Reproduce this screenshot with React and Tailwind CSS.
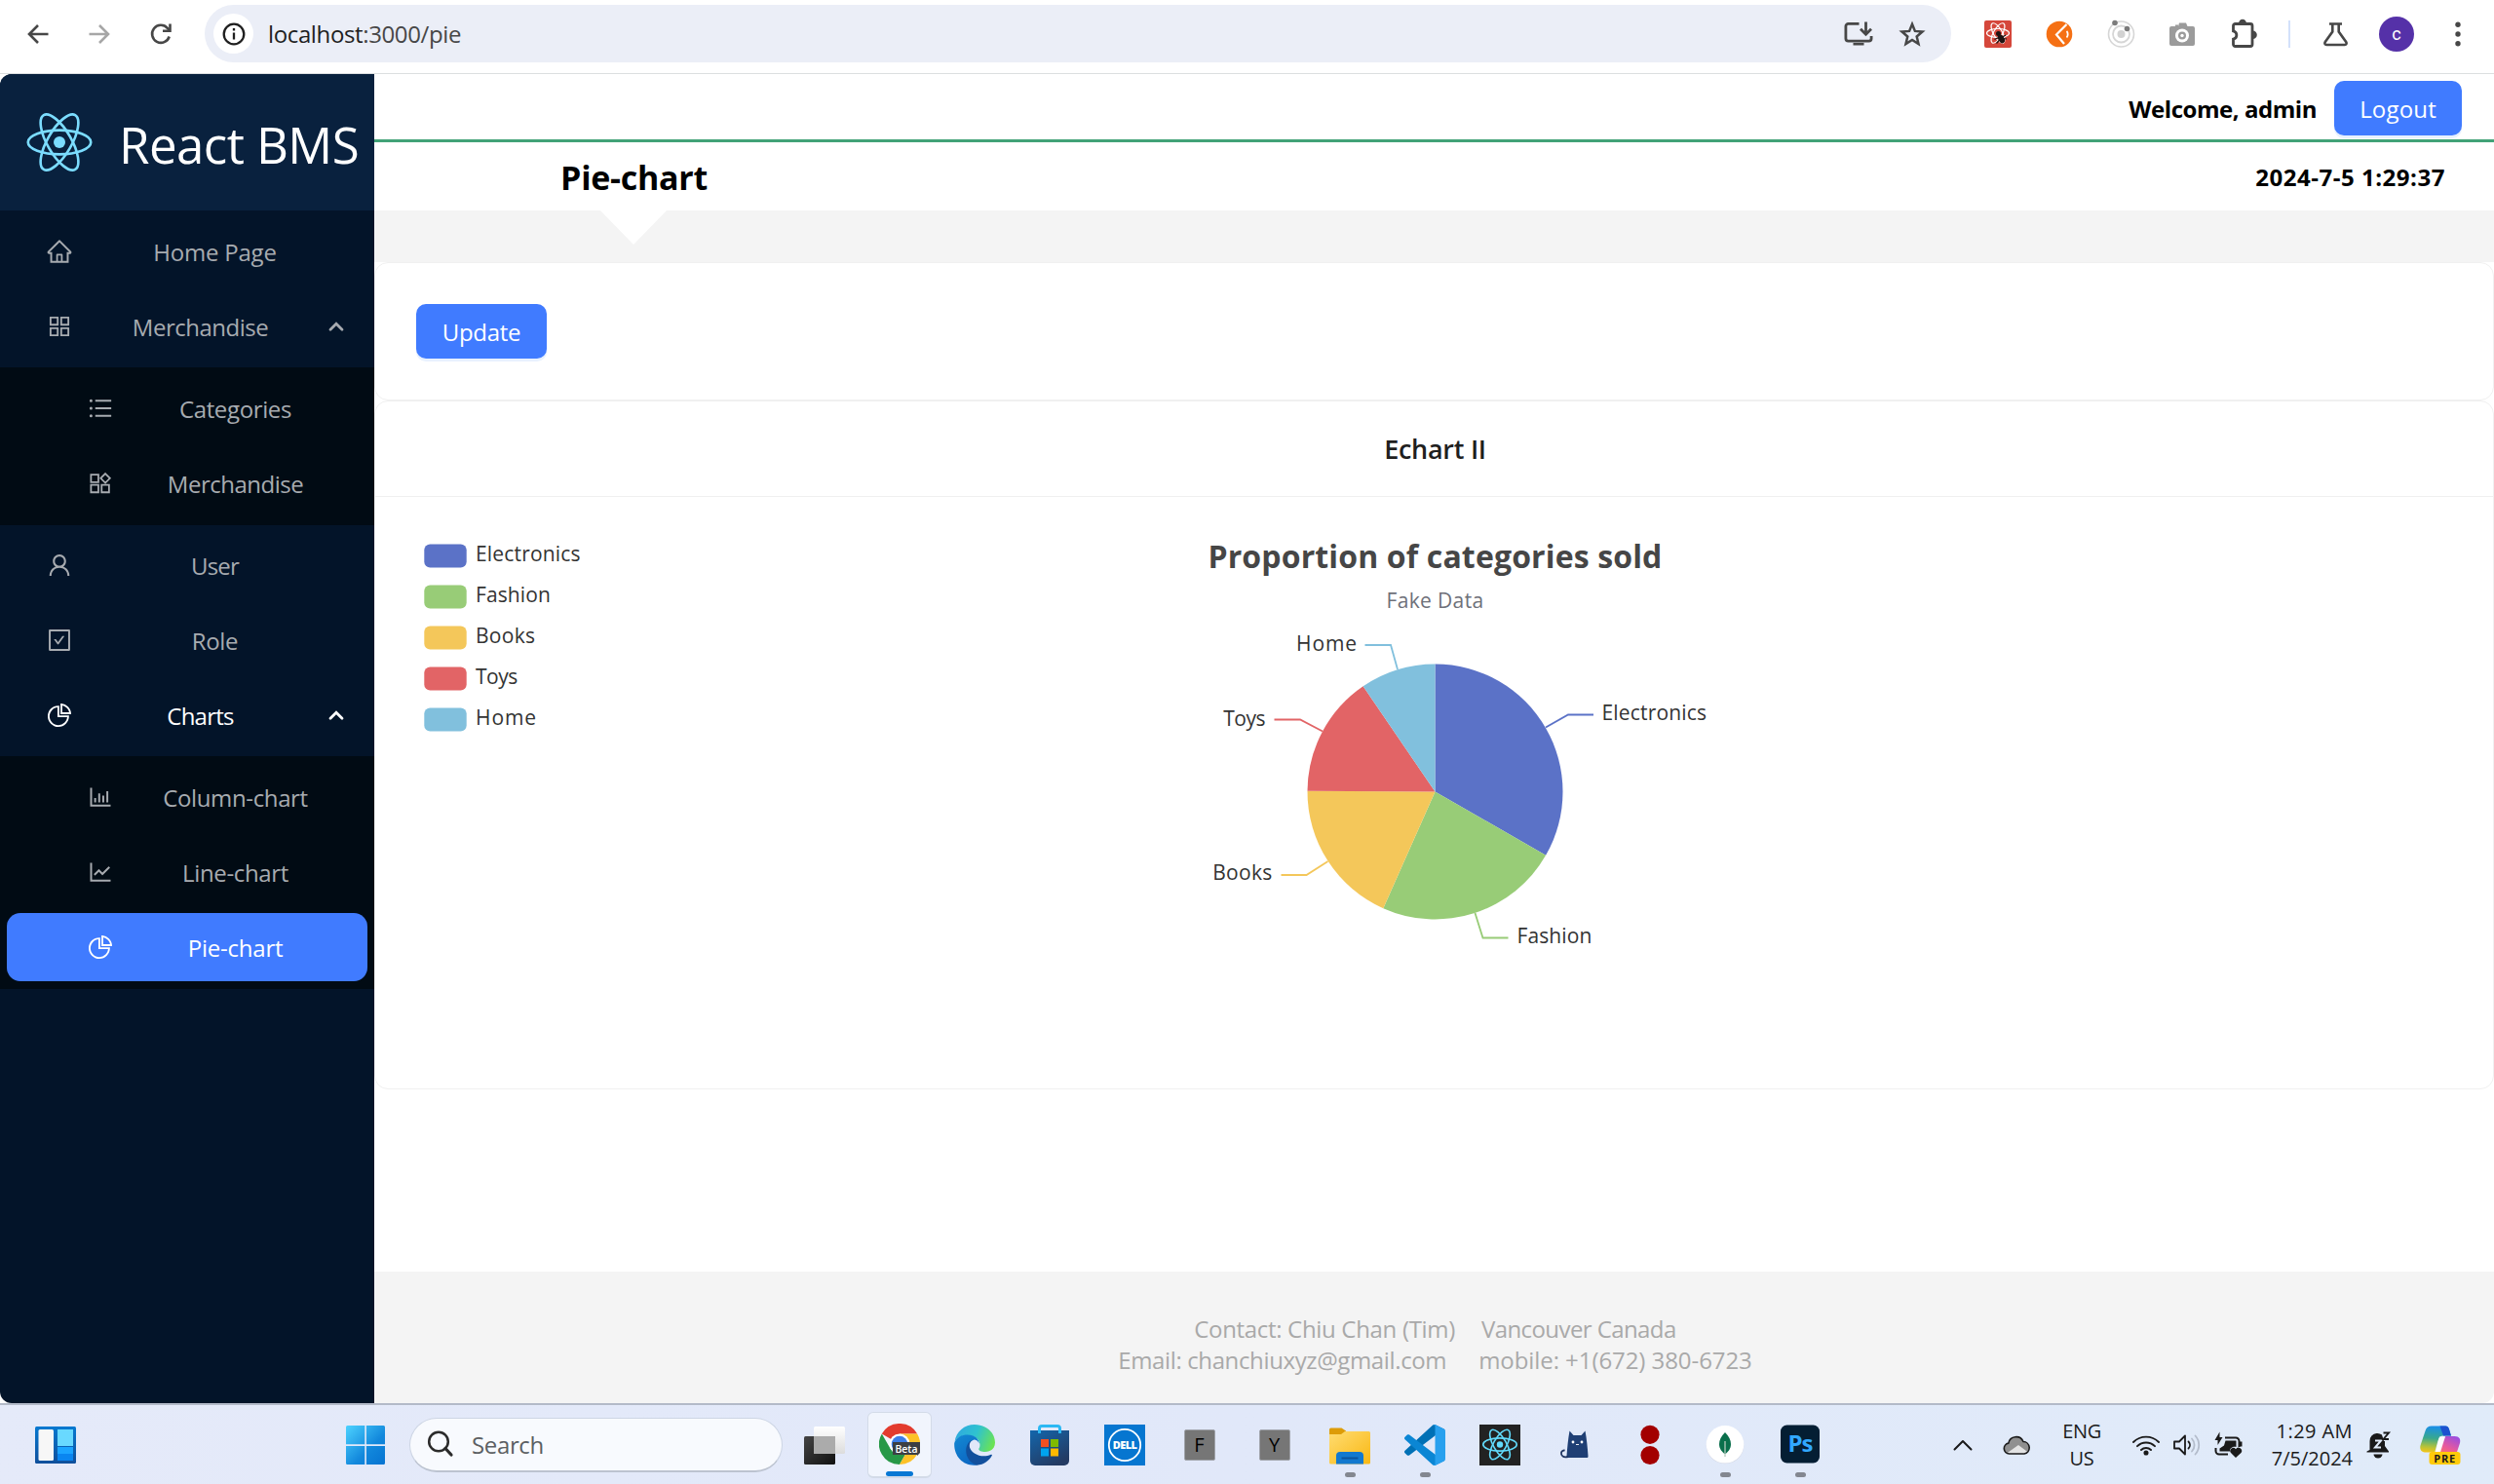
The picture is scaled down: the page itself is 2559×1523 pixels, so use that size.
import React from "react";
import {
  AiOutlineHome,
  AiOutlineAppstore,
  AiOutlineUnorderedList,
  AiOutlineUser,
  AiOutlineCheckSquare,
  AiOutlinePieChart,
  AiOutlineBarChart,
  AiOutlineLineChart,
} from "react-icons/ai";

/* ---------- shared drawings ---------- */

function ReactMark({ className, stroke = 1, color = "#7bdcfe" }) {
  return (
    <svg className={className} viewBox="-11.5 -10.23 23 20.46" fill="none">
      <circle r="2.05" fill={color} />
      <g stroke={color} strokeWidth={stroke}>
        <ellipse rx="11" ry="4.2" />
        <ellipse rx="11" ry="4.2" transform="rotate(60)" />
        <ellipse rx="11" ry="4.2" transform="rotate(120)" />
      </g>
    </svg>
  );
}

/* ---------- browser toolbar ---------- */

function Toolbar() {
  return (
    <header className="flex h-[76px] items-center border-b border-[#dcdfe0] bg-white pb-[6px] pl-[28px]">
      <svg className="h-6 w-[22px]" viewBox="0 0 22 24" fill="none" stroke="#474747" strokeWidth="2.6">
        <path d="M21.5 12H2.5M11 3L2 12l9 9" />
      </svg>
      <svg className="ml-[41px] h-6 w-[22px]" viewBox="0 0 22 24" fill="none" stroke="#a6a6a6" strokeWidth="2.6">
        <path d="M0.500 12H19.500M11 3l9 9-9 9" />
      </svg>
      <svg className="ml-[41px] h-6 w-[22px]" viewBox="0 0 22 24" fill="none" stroke="#474747" strokeWidth="2.6">
        <path d="M19.700 14.500A9 9 0 1 1 17.800 5.800L20 8.200" />
        <path d="M20.500 1.500V8.800H13" />
      </svg>
      <div className="ml-[34px] flex h-[59px] w-[1792px] items-center rounded-full bg-[#ebeef7] pl-[9px] pr-[26px]">
        <span className="flex size-[41px] items-center justify-center rounded-full bg-white">
          <svg className="size-6" viewBox="0 0 24 24" fill="none" stroke="#1f1f1f" strokeWidth="2.3">
            <circle cx="12" cy="12" r="10.300" />
            <path d="M12 10.500v7M12 6v2.500" />
          </svg>
        </span>
        <span className="ml-[15px] text-[24px] tracking-[-0.37px] text-[#1f1f1f]">
          localhost<span className="text-[#474747]">:3000/pie</span>
        </span>
        <svg className="ml-auto h-[26px] w-[30px]" viewBox="0 0 30 26" fill="none" stroke="#474747" strokeWidth="2.8">
          <path d="M15.500 2.400H4.500a2.600 2.600 0 0 0-2.600 2.600v12.500a2.600 2.600 0 0 0 2.600 2.600h21a2.600 2.600 0 0 0 2.600-2.600V15" />
          <path d="M9.500 22h11v2.500h-11z" fill="#474747" stroke="none" />
          <path d="M22.500 0.500v12M17 7.800l5.500 5.500L28 7.800" />
        </svg>
        <svg className="ml-[26px] size-[28px]" viewBox="0 0 28 28" fill="none" stroke="#474747" strokeWidth="2.5">
          <path d="M14 3.800l2.900 7.100 7.600.6-5.800 5 1.800 7.500L14 20l-6.500 4 1.800-7.500-5.800-5 7.600-.6z" />
        </svg>
      </div>
      <svg className="ml-[34px] size-[28px]" viewBox="0 0 28 28">
        <rect width="28" height="28" rx="2" fill="#d5473b" />
        <g fill="none" stroke="#fff" strokeWidth="1.200" transform="translate(14 13)">
          <ellipse rx="11.500" ry="4.500" />
          <ellipse rx="11.500" ry="4.500" transform="rotate(60)" />
          <ellipse rx="11.500" ry="4.500" transform="rotate(120)" />
        </g>
        <g stroke="#1f1413" strokeWidth="1.200" fill="#1f1413">
          <circle cx="14.500" cy="13.500" r="1.900" />
          <ellipse cx="17.500" cy="19" rx="2.400" ry="4" transform="rotate(-30 17.500 19)" />
          <path d="M10.500 19.500l5-2.500M12.500 23.500l3.500-4M22 15l-4 2.500M23 19l-4-.5" />
        </g>
      </svg>
      <svg className="ml-[35px] size-[28px]" viewBox="0 0 28 28">
        <circle cx="14" cy="14" r="13.300" fill="#f57014" />
        <path d="M21.500 4L11 14.500l8 9.500" fill="none" stroke="#fff" strokeWidth="2.200" />
        <path d="M21.500 11c1.600 1.500 1.600 5 0 6.500" fill="none" stroke="#fff" strokeWidth="1.800" />
      </svg>
      <svg className="ml-[35px] size-[29px]" viewBox="0 0 29 29" fill="none">
        <circle cx="14.500" cy="15" r="13" stroke="#d6d6d6" strokeWidth="1.600" />
        <circle cx="14.500" cy="15" r="8.500" stroke="#d6d6d6" strokeWidth="1.800" />
        <circle cx="14.500" cy="15" r="4" fill="#d2d2d2" />
        <circle cx="8" cy="3.500" r="2.800" fill="#7b7b7b" />
        <circle cx="20.500" cy="9.500" r="2.800" fill="#7b7b7b" />
      </svg>
      <svg className="ml-[35px] size-[26px]" viewBox="0 0 26 26">
        <path d="M2 5h4V3.500h3V5l1-3.500h7L18.500 5H24a2 2 0 0 1 2 2v16a2 2 0 0 1-2 2H2a2 2 0 0 1-2-2V7a2 2 0 0 1 2-2z" fill="#9b9b9b" />
        <circle cx="13" cy="14.500" r="7" fill="#fff" />
        <circle cx="13" cy="14.500" r="4" fill="#9b9b9b" />
        <circle cx="13" cy="14.500" r="1.700" fill="#fff" />
      </svg>
      <svg className="ml-[37px] h-[30px] w-[29px] -translate-y-[1px]" viewBox="0 0 29 30">
        <path
          d="M2.500 7.500a2 2 0 0 1 2-2h15.500a2 2 0 0 1 2 2v19a2 2 0 0 1-2 2H4.500a2 2 0 0 1-2-2v-5.300a4.300 4.300 0 0 0 0-8.400z"
          fill="none"
          stroke="#474747"
          strokeWidth="2.800"
        />
        <path d="M8 5a4 4.300 0 0 1 8 0zM22.500 12.500a4.300 4.300 0 0 1 0 8.600z" fill="#474747" />
      </svg>
      <span className="ml-[30px] h-[28px] w-[2px] bg-[#d3e1fb]" />
      <svg className="ml-[33px] h-[26px] w-[27px]" viewBox="0 0 27 26" fill="none" stroke="#474747" strokeWidth="2.600">
        <path d="M7 2.500h13M10.300 2.500v8L2.800 21c-1 1.500-.3 3 1.400 3h18.600c1.700 0 2.400-1.500 1.400-3l-7.500-10.500v-8" />
      </svg>
      <span className="ml-[31px] flex size-[36px] items-center justify-center rounded-full bg-[#5531a8] font-[Roboto] text-[18px] text-white">
        c
      </span>
      <svg className="ml-[42px] h-[26px] w-[6px]" viewBox="0 0 6 26" fill="#474747">
        <circle cx="3" cy="3.200" r="2.700" />
        <circle cx="3" cy="13" r="2.700" />
        <circle cx="3" cy="22.800" r="2.700" />
      </svg>
    </header>
  );
}

/* ---------- sidebar ---------- */

function ProductIcon({ className }) {
  return (
    <svg className={className} viewBox="-2.300 -2.500 29.500 29.500" fill="none" stroke="currentColor" strokeWidth="1.900">
      <path d="M2.300 3h8v8h-8zM2.300 14h8v8h-8zM13.800 14h8v8h-8zM17.800 1.800l5 5-5 5-5-5z" />
    </svg>
  );
}

function Arrow() {
  return (
    <svg className="h-[12px] w-[16px]" viewBox="0 0 16 12" fill="none" stroke="currentColor" strokeWidth="2.800" strokeLinecap="round">
      <path d="M2 9.300l6-6 6 6" />
    </svg>
  );
}

function MenuRow({ icon: Icon, label, track, sub, open, state }) {
  return (
    <div
      className={
        "mx-[7px] mb-[7px] flex h-[70px] items-center rounded-[14px] text-[24px] " +
        (sub ? "pl-[82px] " : "pl-[40px] ") +
        (open ? "pr-[24px] " : "pr-[28px] ") +
        (state === "selected" ? "bg-[#407bff] text-white" : state === "active" ? "text-white" : "text-[#a7abb0]")
      }
    >
      <Icon className="size-[28px] shrink-0" />
      <span className={"ml-[17px] flex-1 pt-[2px] text-center " + track}>{label}</span>
      {open && (
        <span className="ml-[18px]">
          <Arrow />
        </span>
      )}
    </div>
  );
}

function Sidebar() {
  return (
    <aside className="flex w-[384px] shrink-0 flex-col bg-[#031429]">
      <div className="flex h-[140px] items-center bg-[#09213e] pl-[27px]">
        <ReactMark className="h-[60px] w-[68px]" stroke={0.9} />
        <h1 className="ml-[27px] whitespace-nowrap pt-[4px] text-[51px] leading-[60px] tracking-[-0.56px] text-white">React BMS</h1>
      </div>
      <nav className="pt-[7px]">
        <MenuRow icon={AiOutlineHome} label="Home Page" track="tracking-[-0.23px]" />
        <MenuRow icon={AiOutlineAppstore} label="Merchandise" track="tracking-[-0.5px]" open />
        <div className="bg-[#010b14] pb-px pt-[7px]">
          <MenuRow icon={AiOutlineUnorderedList} label="Categories" track="tracking-[-0.37px]" sub />
          <MenuRow icon={ProductIcon} label="Merchandise" track="tracking-[-0.5px]" sub />
        </div>
        <div className="pt-[6px]">
          <MenuRow icon={AiOutlineUser} label="User" track="tracking-[-0.8px]" />
          <MenuRow icon={AiOutlineCheckSquare} label="Role" track="tracking-[-0.34px]" />
          <MenuRow icon={AiOutlinePieChart} label="Charts" track="tracking-[-0.77px]" open state="active" />
        </div>
        <div className="bg-[#010b14] pt-[7px] pb-px">
          <MenuRow icon={AiOutlineBarChart} label="Column-chart" track="tracking-[-0.37px]" sub />
          <MenuRow icon={AiOutlineLineChart} label="Line-chart" track="tracking-[-0.35px]" sub />
          <MenuRow icon={AiOutlinePieChart} label="Pie-chart" track="tracking-[-0.22px]" sub state="selected" />
        </div>
      </nav>
    </aside>
  );
}

/* ---------- chart ---------- */

const CX = 1472.5;
const CY = 812.5;
const R = 131;

const SLICES = [
  { name: "Electronics", value: 1048, color: "#5b72c7", line: "1586,746.5 1609,733.5 1635,733.5", x: 1643.5, y: 739, anchor: "start", w: "tracking-[0.17px]" },
  { name: "Fashion", value: 735, color: "#98cc77", line: "1513.5,937 1521.5,962.5 1547.5,962.5", x: 1556.5, y: 968, anchor: "start", w: "tracking-[0.11px]" },
  { name: "Books", value: 580, color: "#f4c75a", line: "1362.5,884 1340.5,898 1314.5,898", x: 1305.5, y: 903, anchor: "end", w: "tracking-[0.28px]" },
  { name: "Toys", value: 484, color: "#e26466", line: "1357,750.5 1334,738.5 1307.5,738.5", x: 1298, y: 744.5, anchor: "end", w: "tracking-[-0.5px]" },
  { name: "Home", value: 300, color: "#81c0dd", line: "1434,687 1427,662 1400.5,662", x: 1393, y: 668, anchor: "end", w: "tracking-[0.9px]" },
];

function PieChart() {
  const total = SLICES.reduce((s, d) => s + d.value, 0);
  let acc = 0;
  const at = (v) => {
    const a = (v / total) * 2 * Math.PI;
    return `${CX + R * Math.sin(a)} ${CY - R * Math.cos(a)}`;
  };
  return (
    <svg className="h-[370px] w-[600px]" viewBox="1172 631 600 370">
      {SLICES.map((d) => {
        const from = at(acc);
        acc += d.value;
        return (
          <g key={d.name}>
            <polyline points={d.line} fill="none" stroke={d.color} strokeWidth="1.800" />
            <path d={`M${CX} ${CY}L${from}A${R} ${R} 0 0 1 ${at(acc)}Z`} fill={d.color} />
            <text x={d.x} y={d.y} textAnchor={d.anchor} className={"fill-[#333333] text-[21px] " + d.w}>
              {d.name}
            </text>
          </g>
        );
      })}
    </svg>
  );
}

function ChartCard() {
  return (
    <section className="h-[707px] rounded-[14px] border border-[#f0f0f0] bg-white">
      <h3 className="h-[98px] border-b border-[#f0f0f0] pl-[2px] text-center text-[27px] font-semibold leading-[98px] tracking-[-0.27px] text-[#1f1f1f]">
        Echart II
      </h3>
      <div className="grid grid-cols-[1fr_600px_1fr] pt-10">
        <ul className="pl-[50px]">
          {SLICES.map((d) => (
            <li key={d.name} className="flex h-[42px] items-center">
              <svg className="h-[25px] w-[44px] -translate-y-px" viewBox="0 0 44 25">
                <rect x="0.300" y="0.400" width="43.400" height="24.200" rx="6" fill={d.color} />
              </svg>
              <span className={"ml-[9px] -translate-y-[2px] text-[21px] text-[#333333] " + d.w}>{d.name}</span>
            </li>
          ))}
        </ul>
        <div className="text-center">
          <h2 className="pl-[2px] pt-px text-[32px] font-bold leading-[40px] tracking-[0.14px] text-[#464646]">Proportion of categories sold</h2>
          <p className="mt-[10px] pl-[2px] text-[21px] leading-[30px] tracking-[0.35px] text-[#6e7079]">Fake Data</p>
          <PieChart />
        </div>
      </div>
    </section>
  );
}

/* ---------- main column ---------- */

const BUTTON =
  "flex h-[56px] items-center justify-center rounded-[10px] bg-[#407bff] text-[24px] text-white shadow-[0_3px_0_#e8f1fe]";

function Main() {
  return (
    <div className="flex min-w-0 flex-1 flex-col bg-white">
      <div className="flex h-[70px] items-center justify-end border-b-[3px] border-[#41a277] pr-[33px] pt-[3px]">
        <span className="mr-[18px] pt-[2px] text-[24px] font-bold tracking-[-0.46px] text-black">Welcome, admin</span>
        <button className={BUTTON + " w-[131px] pt-px tracking-[0.17px]"}>Logout</button>
      </div>
      <div className="flex h-[70px] items-center">
        <div className="relative flex h-full w-[533px] items-center justify-center pt-[2px] text-[34px] font-bold tracking-[-0.28px] text-black">
          Pie-chart
          <svg className="absolute left-[231px] top-[69px] h-[36px] w-[70px]" viewBox="0 0 70 36">
            <path d="M0 0H70L35 36Z" fill="#fff" />
          </svg>
        </div>
        <span className="ml-auto pr-[50px] pt-px text-[24px] font-bold tracking-[0.53px] text-black">2024-7-5 1:29:37</span>
      </div>
      <div className="h-[53px] bg-[#f4f4f4]" />
      <section className="flex h-[142px] items-center rounded-[14px] border border-[#f0f0f0] bg-white pl-[42px]">
        <button className={BUTTON + " w-[134px] pt-px tracking-[-0.29px]"}>Update</button>
      </section>
      <ChartCard />
      <footer className="mt-auto h-[135px] bg-[#f4f4f4] pl-[2px] pt-[43px] text-[24px] leading-[32px] text-[#a9a9a9]">
        <p className="flex justify-center gap-[27px]">
          <span className="tracking-[-0.32px]">Contact: Chiu Chan (Tim)</span>
          <span className="tracking-[-0.58px]">Vancouver Canada</span>
        </p>
        <p className="flex justify-center gap-[33px]">
          <span className="tracking-[-0.37px]">Email: chanchiuxyz@gmail.com</span>
          <span className="tracking-[-0.07px]">mobile: +1(672) 380-6723</span>
        </p>
      </footer>
    </div>
  );
}

/* ---------- taskbar ---------- */

function TaskView() {
  return (
    <svg className="size-[42px]" viewBox="0 0 42 42">
      <defs>
        <linearGradient id="tvDark" x1="0" y1="0" x2="1" y2="1">
          <stop offset="0" stopColor="#444" />
          <stop offset="1" stopColor="#111" />
        </linearGradient>
        <linearGradient id="tvLight" x1="0" y1="0" x2="0" y2="1">
          <stop offset="0" stopColor="#fff" />
          <stop offset="1" stopColor="#dcdcdc" />
        </linearGradient>
      </defs>
      <rect x="0" y="12" width="32" height="29" rx="1.500" fill="url(#tvDark)" />
      <rect x="10" y="2" width="32" height="28" rx="1.500" fill="url(#tvLight)" />
      <rect x="10" y="12" width="22" height="18" fill="#ababab" />
    </svg>
  );
}

function ChromeBeta() {
  return (
    <svg className="size-[42px]" viewBox="0 0 42 42">
      <path d="M21 21L2.800 10.500A21 21 0 0 1 39.200 10.500H21z" fill="#e33b2e" />
      <path d="M2.800 10.500A21 21 0 0 0 21 42L30.100 26.200 21 31.500 11.900 26.200z" fill="#279847" />
      <path d="M21 10.500H39.200A21 21 0 0 1 21 42L30.100 26.200z" fill="#fdc126" />
      <circle cx="21" cy="21" r="10.500" fill="#fff" />
      <circle cx="21" cy="21" r="8.300" fill="#3b7de8" />
      <path d="M14 19h28v11l-3 3v-1H14z" fill="#3c3f43" />
      <text x="28" y="29.500" textAnchor="middle" className="fill-white text-[10.500px] font-semibold">Beta</text>
    </svg>
  );
}

function Edge() {
  return (
    <svg className="size-[42px]" viewBox="0 0 42 42">
      <defs>
        <linearGradient id="edTop" x1="0" y1="0.300" x2="1" y2="0.600">
          <stop offset="0" stopColor="#2fa9e0" />
          <stop offset="0.500" stopColor="#2fc2cf" />
          <stop offset="1" stopColor="#6be353" />
        </linearGradient>
        <linearGradient id="edLeft" x1="0" y1="0" x2="0.500" y2="1">
          <stop offset="0" stopColor="#1389d3" />
          <stop offset="1" stopColor="#0c68c3" />
        </linearGradient>
      </defs>
      <path d="M0.500 18C2 7 10.500 0 21 0c12 0 21 8.500 21 18.500 0 6-4.500 9.500-10 9.500-5 0-7.500-2-6.500-3.500 3-5-1-13.500-11.500-13.500C7 11 2 14 .5 18z" fill="url(#edTop)" />
      <path d="M0.200 19C2 13 8 10.500 13.500 10.500c8 0 12 4.500 12 9 0 0-1-4-5-4-9 3-9.500 18 3 26C10 43.500-.500 33 .2 19z" fill="url(#edLeft)" />
      <path d="M18.500 15.800C9 20 10 38 23.500 41.700c7-.7 12.500-4.700 15.300-10 .4-.9-.3-1.300-1-.9C28.500 35 18 30 16 23.500c-.7-3 .5-6 2.500-7.700z" fill="#12509d" />
    </svg>
  );
}

function Store() {
  return (
    <svg className="size-[42px]" viewBox="0 0 42 42">
      <defs>
        <linearGradient id="stBag" x1="0" y1="0" x2="0.600" y2="1">
          <stop offset="0" stopColor="#1366ac" />
          <stop offset="1" stopColor="#243b63" />
        </linearGradient>
      </defs>
      <path d="M1 6h40v31a5 5 0 0 1-5 5H6a5 5 0 0 1-5-5z" fill="url(#stBag)" />
      <path d="M10.500 9V4a2.500 2.500 0 0 1 2.500-2.500h16a2.500 2.500 0 0 1 2.500 2.500v5" fill="none" stroke="#2cb8f3" strokeWidth="3" />
      <path d="M12 15h8v8h-8z" fill="#f25022" />
      <path d="M22 15h8v8h-8z" fill="#7fba00" />
      <path d="M12 24.500h8v8h-8z" fill="#00a4ef" />
      <path d="M22 24.500h8v8h-8z" fill="#ffb900" />
    </svg>
  );
}

function Dell() {
  return (
    <svg className="size-[42px]" viewBox="0 0 42 42">
      <rect width="42" height="42" fill="#0676d0" />
      <circle cx="21" cy="21" r="16.200" fill="none" stroke="#fff" strokeWidth="1.800" />
      <text x="21" y="25" textAnchor="middle" className="fill-white text-[11px] font-extrabold tracking-[-0.6px]">DELL</text>
    </svg>
  );
}

function KeyTile({ letter }) {
  return (
    <span className="flex size-[32px] items-center justify-center rounded-[2px] border border-[#a0a3aa] bg-[#767676] text-[20px] leading-none text-black">
      {letter}
    </span>
  );
}

function Folder() {
  return (
    <svg className="size-[42px]" viewBox="0 0 42 42">
      <defs>
        <linearGradient id="fdY" x1="0" y1="0" x2="1" y2="1">
          <stop offset="0" stopColor="#ffdc72" />
          <stop offset="1" stopColor="#f9b813" />
        </linearGradient>
      </defs>
      <path d="M0 5a1.500 1.500 0 0 1 1.500-1.500h11L17 6.500V12H0z" fill="#dd9c08" />
      <path d="M0 10h12l4-3h24.500A1.500 1.500 0 0 1 42 8.500V39a1.500 1.500 0 0 1-1.500 1.500h-39A1.500 1.500 0 0 1 0 39z" fill="url(#fdY)" />
      <path d="M7 40.500V32a4 4 0 0 1 4-4h20a4 4 0 0 1 4 4v8.500z" fill="#1279cf" />
      <path d="M12.500 34.500h17" stroke="#0a559c" strokeWidth="2" />
    </svg>
  );
}

function VsCode() {
  return (
    <svg className="size-[42px]" viewBox="0 0 100 100">
      <path d="M96.461 10.796L75.857.876C73.472-.273 70.622.212 68.750 2.083L1.299 63.583c-1.815 1.654-1.813 4.511.004 6.162l5.510 5.009c1.485 1.350 3.722 1.450 5.321.237L93.361 13.370C96.086 11.303 100 13.246 100 16.667v-.240c0-2.401-1.375-4.589-3.539-5.631z" fill="#0070b5" />
      <path d="M96.461 89.204L75.857 99.125c-2.385 1.148-5.235.663-7.107-1.208L1.299 36.417c-1.815-1.654-1.813-4.511.004-6.162l5.510-5.009c1.485-1.350 3.722-1.450 5.321-.237L93.361 86.630C96.086 88.697 100 86.754 100 83.333v.240c0 2.401-1.375 4.589-3.539 5.631z" fill="#0b86d4" />
      <path d="M75.858 99.126c-2.386 1.148-5.236.662-7.108-1.209C71.056 100.223 75 98.590 75 95.328V4.672C75 1.410 71.056-.223 68.750 2.083 70.622.211 73.472-.274 75.858.874l20.601 9.907C98.623 11.822 100 14.011 100 16.413v67.174c0 2.402-1.377 4.592-3.541 5.633z" fill="#28a0ee" />
    </svg>
  );
}

function ReactTile() {
  return (
    <span className="flex size-[42px] items-center justify-center bg-[#222222]">
      <ReactMark className="h-[33px] w-[36px]" stroke={1.05} color="#61dafb" />
    </span>
  );
}

function Cat() {
  return (
    <svg className="size-[42px]" viewBox="0 0 42 42">
      <path d="M15.500 6.500l4 4.500h8l4-4.500c1.500 8 2.500 18 3 26 0 1-.5 1.500-1.500 1.500H14c-1 0-1.500-.5-1.500-1.500 .5-8 1.500-18 3-26z" fill="#1f3f74" />
      <path d="M14 33c-5 1.200-7.500-1-7-4 .3-1.800 2-2.800 3.600-2.400" fill="none" stroke="#1f3460" strokeWidth="1.800" />
      <circle cx="19" cy="18" r="1.400" fill="#fff" />
      <circle cx="28" cy="18" r="1.400" fill="#fff" />
      <path d="M22 20.500h3" stroke="#fff" strokeWidth="0.900" />
    </svg>
  );
}

function RedDots() {
  return (
    <svg className="size-[42px]" viewBox="0 0 42 42" fill="#a30000">
      <circle cx="21" cy="10.300" r="9.600" />
      <circle cx="21" cy="31.500" r="9.600" />
    </svg>
  );
}

function Mongo() {
  return (
    <svg className="size-[42px]" viewBox="0 0 42 42">
      <circle cx="21" cy="21" r="19.300" fill="#d5d9e6" />
      <circle cx="21" cy="20.300" r="19.300" fill="#fff" />
      <path d="M21 8c4 4 6 8 6 12 0 5-3 8-5.500 10h-1C18 28 15 25 15 20c0-4 2-8 6-12z" fill="#0a6f4c" />
      <path d="M21 17v16" stroke="#b4c9bd" strokeWidth="1.300" />
    </svg>
  );
}

function Photoshop() {
  return (
    <svg className="size-[42px]" viewBox="0 0 42 42">
      <rect x="1" y="0.500" width="40" height="39" rx="6.500" fill="#041e33" />
      <text x="21" y="28" textAnchor="middle" className="fill-[#31a8ff] text-[24px] font-bold tracking-[-1px]">Ps</text>
    </svg>
  );
}

const APPS = [
  { icon: <TaskView /> },
  { icon: <ChromeBeta />, focused: true },
  { icon: <Edge /> },
  { icon: <Store /> },
  { icon: <Dell /> },
  { icon: <KeyTile letter="F" /> },
  { icon: <KeyTile letter="Y" /> },
  { icon: <Folder />, running: true },
  { icon: <VsCode />, running: true },
  { icon: <ReactTile /> },
  { icon: <Cat /> },
  { icon: <RedDots /> },
  { icon: <Mongo />, running: true },
  { icon: <Photoshop />, running: true },
];

function AppCell({ icon, focused, running }) {
  return (
    <div className="flex w-[77px] justify-center">
      <div
        className={
          "relative flex h-[68px] w-[66px] items-center justify-center rounded-[6px] " +
          (focused ? "border border-b-2 border-[#d3dbe8] bg-[#f1f5fd]" : "")
        }
      >
        {icon}
        {focused && <span className="absolute bottom-0 left-[18px] h-[5px] w-[28px] rounded-full bg-[#0878d4]" />}
        {running && <span className="absolute bottom-[1px] left-[28px] h-[5px] w-[11px] rounded-full bg-[#838790]" />}
      </div>
    </div>
  );
}

function Tray() {
  return (
    <>
      <svg className="ml-[119px] h-[12px] w-[20px]" viewBox="0 0 20 12" fill="none" stroke="#1a1a1a" strokeWidth="2" strokeLinecap="round" strokeLinejoin="round">
        <path d="M1.500 10.500L10 2l8.500 8.500" />
      </svg>
      <svg className="ml-[31px] h-[20px] w-[28px]" viewBox="0 0 28 20">
        <path d="M6.500 19a5.500 5.500 0 0 1-.7-10.900A8 8 0 0 1 21 6.500a6.300 6.300 0 0 1 1 12.500z" fill="#8f8f8f" />
        <path d="M4 18.500L16 10l10 7.500-2 1.500H6z" fill="#e3e3e3" />
        <path d="M6.500 19a5.500 5.500 0 0 1-.7-10.900A8 8 0 0 1 21 6.500a6.300 6.300 0 0 1 1 12.500z" fill="none" stroke="#1a1a1a" strokeWidth="1.600" />
      </svg>
      <div className="ml-[30px] w-[46px] pt-px text-center text-[20px] leading-[28px] tracking-[-0.34px] text-[#1b1b1b]">
        <div>ENG</div>
        <div>US</div>
      </div>
      <svg className="ml-[29px] h-[22px] w-[28px]" viewBox="0 0 28 22" fill="none" stroke="#1a1a1a" strokeWidth="1.900" strokeLinecap="round">
        <path d="M1 8a18.500 18.500 0 0 1 26 0M5 12.200a12.700 12.700 0 0 1 18 0M9 16a7.200 7.200 0 0 1 10 0" />
        <circle cx="14" cy="19" r="1.600" fill="#1a1a1a" />
      </svg>
      <svg className="ml-[14px] h-[22px] w-[28px]" viewBox="0 0 28 22" fill="none" strokeWidth="1.800" strokeLinecap="round" strokeLinejoin="round">
        <path d="M1 7.500h5L12 1.500v19L6 14.500H1z" stroke="#1a1a1a" />
        <path d="M15.500 7.500a5 5 0 0 1 0 7" stroke="#1a1a1a" />
        <path d="M19 4.500a9.500 9.500 0 0 1 0 13M22.500 1.500a14 14 0 0 1 0 19" stroke="#b3bccb" />
      </svg>
      <svg className="ml-[14px] h-[28px] w-[29px]" viewBox="0 0 29 28">
        <path d="M11 6.500h11a3.500 3.500 0 0 1 3.500 3.500v6M1.500 17v3a3.500 3.500 0 0 0 3.500 3.500h9" fill="none" stroke="#1a1a1a" strokeWidth="2" />
        <path d="M11.500 9.500h11v6.500c-3-1-7 1-6.500 4.500H5.500v-3l4.500-3z" fill="#1a1a1a" />
        <path d="M5.500 0.500L0.500 9h3v5l5-8h-3zM26 10.500h2.500v5H26z" fill="#1a1a1a" />
        <path d="M22 27l-5-5a3 3 0 0 1 5-3.800A3 3 0 0 1 27.500 22z" fill="#1a1a1a" />
      </svg>
      <div className="ml-[21px] w-[92px] whitespace-nowrap text-right text-[20px] leading-[28px] text-[#1b1b1b]">
        <div className="tracking-[0.43px]">1:29 AM</div>
        <div>7/5/2024</div>
      </div>
      <svg className="ml-[14px] h-[29px] w-[26px]" viewBox="0 0 26 29">
        <path d="M3.500 20V11a7.800 7.800 0 0 1 15.500-1.500v6.500l4 5.500v1H.5v-1z" fill="#1a1a1a" />
        <path d="M7.500 24.500h9a4.500 4 0 0 1-9 0z" fill="#1a1a1a" />
        <path d="M9 10.500h6l-6 7h6" fill="none" stroke="#e2ecfa" strokeWidth="2" />
        <path d="M15 1h9v10h-6z" fill="#e2ecfa" />
        <path d="M17.500 2.500h5.500l-5.500 6.500h5.500" fill="none" stroke="#1a1a1a" strokeWidth="1.900" />
      </svg>
      <svg className="ml-[29px] h-[42px] w-[42px]" viewBox="0 0 42 42">
        <defs>
          <linearGradient id="cpL" x1="0.300" y1="0" x2="0.200" y2="1">
            <stop offset="0" stopColor="#1a8fe8" />
            <stop offset="0.450" stopColor="#38a88e" />
            <stop offset="0.800" stopColor="#b9c338" />
            <stop offset="1" stopColor="#f5c518" />
          </linearGradient>
          <linearGradient id="cpR" x1="0.800" y1="0" x2="0.200" y2="1">
            <stop offset="0" stopColor="#9b4de0" />
            <stop offset="0.550" stopColor="#ea5a9a" />
            <stop offset="1" stopColor="#fb7d5a" />
          </linearGradient>
        </defs>
        <path d="M12 1.500h14c2.500 0 3.500 1.500 4.200 4l1.800 6h-8c-3 0-4.500 1.500-5.500 5l-3.300 12H6.500c-5 0-7-3-6-7L5.500 6.500c1-3.500 3-5 6.500-5z" fill="url(#cpL)" />
        <path d="M20.500 1.500H26c2.500 0 3.500 1.500 4.200 4l1.800 6h-8z" fill="#1c52cf" />
        <path d="M26 12h9.500c5 0 6.500 3 5.500 7l-3 9c-1 3-2.500 4.500-5.500 4.500H15c2.500 0 3.500-1.500 4.500-5z" fill="url(#cpR)" />
        <path d="M20 12.500h6L20.500 30h-5z" fill="#fff" opacity="0.900" />
        <rect x="9.500" y="28" width="32" height="13" rx="3" fill="#ffca0a" />
        <text x="25.700" y="38.500" textAnchor="middle" className="fill-[#1a1a1a] text-[11px] font-bold tracking-[0.8px]">PRE</text>
      </svg>
    </>
  );
}

function Taskbar() {
  return (
    <div className="flex h-[83px] items-center border-t-2 border-[#b3bac8] bg-linear-to-r from-[#e5eaf9] via-[#e1e8f9] to-[#e0ebf9] pl-[36px]">
      <svg className="h-[38px] w-[42px]" viewBox="0 0 42 38">
        <defs>
          <linearGradient id="wg" x1="0" y1="0" x2="0" y2="1">
            <stop offset="0" stopColor="#0779d0" />
            <stop offset="1" stopColor="#0f4f9b" />
          </linearGradient>
        </defs>
        <rect width="42" height="38" rx="1.500" fill="url(#wg)" />
        <rect x="3.500" y="3" width="15.500" height="32" rx="1.500" fill="#f7f7f7" />
        <path d="M23 3h16v17H23z" fill="#69d9ff" />
        <path d="M23 21h16v7H23z" fill="#1ba4ff" />
        <path d="M23 28h16v7H23z" fill="#0a86f0" />
      </svg>
      <svg className="ml-[277px] size-[40px]" viewBox="0 0 40 40">
        <defs>
          <linearGradient id="win" x1="0" y1="0" x2="40" y2="40" gradientUnits="userSpaceOnUse">
            <stop offset="0" stopColor="#4dd2ff" />
            <stop offset="0.600" stopColor="#1288dc" />
            <stop offset="1" stopColor="#0673d1" />
          </linearGradient>
        </defs>
        <path d="M0 1.500A1.500 1.500 0 0 1 1.500 0H19.300V19.300H0zM20.900 0H38.500A1.500 1.500 0 0 1 40 1.500V19.300H20.900zM0 20.900H19.300V40H1.500A1.500 1.500 0 0 1 0 38.500zM20.900 20.900H40V38.500A1.500 1.500 0 0 1 38.500 40H20.900z" fill="url(#win)" />
      </svg>
      <div className="ml-[25px] mr-[4px] flex h-[56px] w-[383px] items-center rounded-full border border-b-2 border-[#cdd5e4] border-b-[#bcc3d0] bg-[#f8fafe] pl-[17px]">
        <svg className="size-[28px]" viewBox="0 0 28 28" fill="none" stroke="#2b2b2b" strokeLinecap="round">
          <circle cx="12" cy="11.500" r="9.800" strokeWidth="2.500" />
          <path d="M19 18.500l6 6.500" strokeWidth="3.200" />
        </svg>
        <span className="ml-[18px] pt-[2px] text-[24px] tracking-[-0.36px] text-[#5c5f63]">Search</span>
      </div>
      {APPS.map((a, i) => (
        <AppCell key={i} {...a} />
      ))}
      <Tray />
    </div>
  );
}

export default function App() {
  return (
    <div className="flex h-[1523px] w-[2559px] flex-col overflow-hidden bg-white font-['Open_Sans','Noto_Sans',sans-serif]">
      <Toolbar />
      <div className="flex h-[1364px] overflow-hidden rounded-[12px]">
        <Sidebar />
        <Main />
      </div>
      <Taskbar />
    </div>
  );
}
